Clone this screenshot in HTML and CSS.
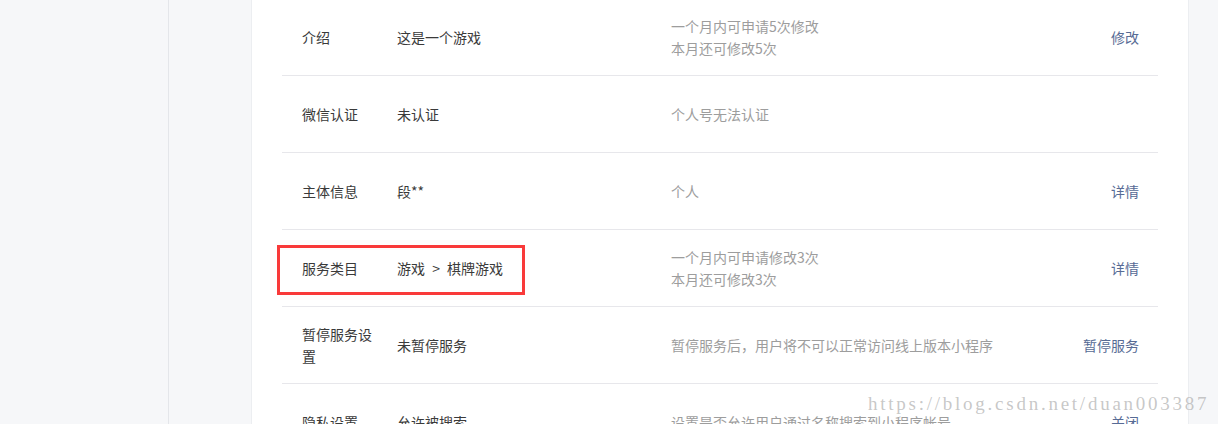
FILE: index.html
```html
<!DOCTYPE html>
<html lang="zh-CN">
<head>
<meta charset="utf-8">
<title>设置</title>
<link rel="stylesheet" href="styles.css">
</head>
<body>
<div class="page">
  <aside class="sidebar"></aside>
  <div class="gutter"></div>
  <main class="panel">
    <ul class="list">
      <li class="row">
        <div class="label">介绍</div>
        <div class="value">这是一个游戏</div>
        <div class="desc">一个月内可申请5次修改<br>本月还可修改5次</div>
        <a class="action">修改</a>
      </li>
      <li class="row">
        <div class="label">微信认证</div>
        <div class="value">未认证</div>
        <div class="desc">个人号无法认证</div>
        <a class="action"></a>
      </li>
      <li class="row">
        <div class="label">主体信息</div>
        <div class="value">段**</div>
        <div class="desc">个人</div>
        <a class="action">详情</a>
      </li>
      <li class="row">
        <div class="label">服务类目</div>
        <div class="value">游戏 <span class="sep">&gt;</span> 棋牌游戏</div>
        <div class="desc">一个月内可申请修改3次<br>本月还可修改3次</div>
        <a class="action">详情</a>
        <span class="highlight"></span>
      </li>
      <li class="row">
        <div class="label">暂停服务设置</div>
        <div class="value">未暂停服务</div>
        <div class="desc">暂停服务后，用户将不可以正常访问线上版本小程序</div>
        <a class="action">暂停服务</a>
      </li>
      <li class="row">
        <div class="label">隐私设置</div>
        <div class="value">允许被搜索</div>
        <div class="desc">设置是否允许用户通过名称搜索到小程序帐号</div>
        <a class="action">关闭</a>
      </li>
    </ul>
  </main>
  <div class="rest"></div>
  <div class="watermark">https://blog.csdn.net/duan003387</div>
</div>
</body>
</html>
```

FILE: styles.css
```css
html, body {
  margin: 0;
  padding: 0;
  height: 424px;
  overflow: hidden;
  background: #f6f7f9;
}

.page {
  position: relative;
  display: flex;
  height: 424px;
  font-family: "Noto Sans CJK SC", "Noto Sans", sans-serif;
  font-size: 14px;
  color: #3a3a3a;
}

.sidebar {
  width: 168px;
  flex: none;
  border-right: 1px solid #e4e6ea;
  background: #f6f7f9;
}

.gutter {
  width: 82px;
  flex: none;
}

.panel {
  flex: none;
  background: #fff;
  border-left: 1px solid #eceef1;
  border-right: 1px solid #eceef1;
  padding: 0 30px;
  width: 876px;
}

.rest {
  flex: 1;
}

.list {
  list-style: none;
  margin: -1px 0 0 0;
  padding: 0;
}

.row {
  position: relative;
  display: flex;
  align-items: center;
  min-height: 76px;
  padding: 0 19px 0 20px;
  border-bottom: 1px solid #e7e7eb;
  line-height: 22px;
}

.label {
  width: 75px;
  margin-right: 20px;
  flex: none;
}

.value {
  width: 274px;
  flex: none;
}

.sep {
  margin: 0 4px;
}

.desc {
  flex: 1;
  color: #9d9d9d;
}

.action {
  flex: none;
  color: #576b95;
  text-decoration: none;
}

.highlight {
  position: absolute;
  left: -5px;
  top: 15px;
  width: 242px;
  height: 44px;
  border: 3px solid #f93a3a;
}

.watermark {
  position: absolute;
  left: 868px;
  top: 393px;
  font-family: "Liberation Serif", "DejaVu Serif", serif;
  font-size: 19px;
  letter-spacing: 2.75px;
  line-height: 22px;
  color: rgba(175, 175, 175, 0.7);
  white-space: nowrap;
}
```
